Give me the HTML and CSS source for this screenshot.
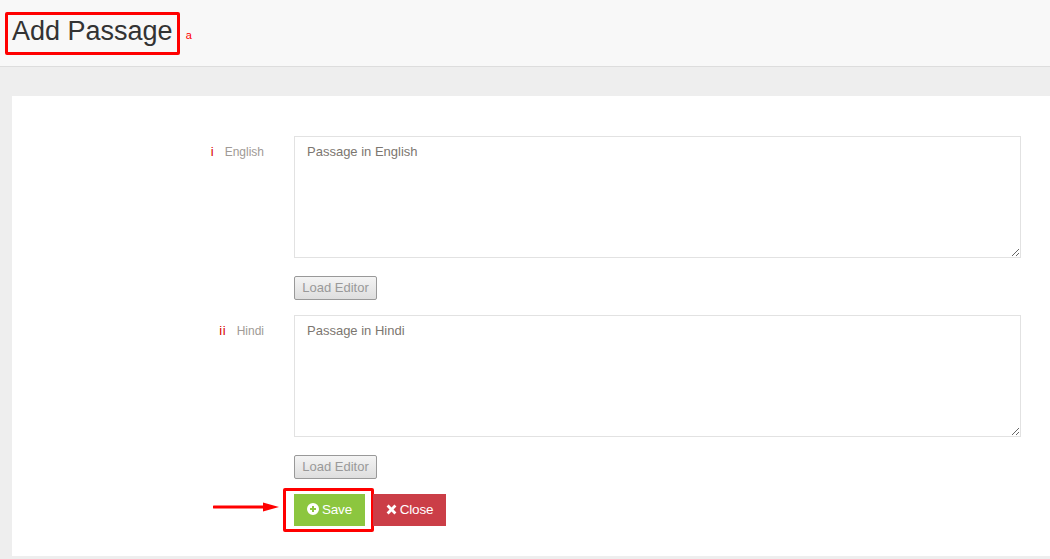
FILE: index.html
```html
<!DOCTYPE html>
<html lang="en">
<head>
<meta charset="utf-8">
<title>Add Passage</title>
<link rel="stylesheet" href="styles.css">
</head>
<body>
<header class="page-head">
  <h1 class="title">Add Passage<span class="title-box"></span></h1>
  <span class="note-a">a</span>
</header>
<main class="panel">
  <form class="form">
    <div class="row">
      <label class="label"><span class="mark">i</span><span>English</span></label>
      <div class="field">
        <textarea class="area" placeholder="Passage in English"></textarea>
        <button type="button" class="load">Load Editor</button>
      </div>
    </div>
    <div class="row">
      <label class="label"><span class="mark">ii</span><span>Hindi</span></label>
      <div class="field">
        <textarea class="area" placeholder="Passage in Hindi"></textarea>
        <button type="button" class="load">Load Editor</button>
      </div>
    </div>
    <div class="row actions-row">
      <div class="label arrow-cell">
        <svg class="arrow" width="66" height="10" viewBox="0 0 66 10"><path d="M1 3.5h50a1.5 1.5 0 0 1 0 3H1a1.5 1.5 0 0 1 0-3z" fill="#f00"/><path d="M50 0.5 66 5 50 9.5z" fill="#f00"/></svg>
      </div>
      <div class="actions">
        <button type="button" class="btn save">
          <svg class="ico" width="12" height="12" viewBox="0 0 12 12"><path fill-rule="evenodd" d="M6 0a6 6 0 1 1 0 12A6 6 0 0 1 6 0zM5 3v2H3v2h2v2h2V7h2V5H7V3z" fill="#fff"/></svg>Save<span class="save-box"></span>
        </button>
        <button type="button" class="btn close">
          <svg class="ico" width="11" height="11" viewBox="0 0 11 11"><path d="M2.6 0.6 5.5 3.5 8.4 0.6l2 2L7.5 5.5l2.9 2.9-2 2L5.5 7.5l-2.9 2.9-2-2L3.5 5.5 0.6 2.6z" fill="#fff"/></svg>Close
        </button>
      </div>
    </div>
  </form>
</main>
</body>
</html>
```

FILE: styles.css
```css
* { box-sizing: border-box; }
html, body { margin: 0; padding: 0; }
body {
  background: #eee;
  font-family: "Liberation Sans", Arial, sans-serif;
  height: 559px;
  overflow: hidden;
}
.page-head {
  height: 67px;
  background: #f8f8f8;
  border-bottom: 1px solid #ddd;
  padding-left: 12px;
  display: flex;
  align-items: flex-start;
}
.title {
  position: relative;
  margin: 14px 0 0;
  font-size: 27px;
  font-weight: 400;
  line-height: 34px;
  color: #333;
}
.title-box {
  position: absolute;
  left: -7px;
  top: -2px;
  width: 175px;
  height: 43px;
  border: 3px solid #f00;
  border-radius: 2px;
}
.note-a {
  margin: 29px 0 0 13px;
  font-size: 11px;
  line-height: 13px;
  color: #f00;
}
.panel {
  margin: 29px 0 0 12px;
  height: 460px;
  background: #fff;
  padding: 40px 29px 0 0;
}
.form { display: flex; flex-direction: column; gap: 15px; }
.row { display: flex; }
.label {
  width: 252px;
  flex: none;
  display: flex;
  justify-content: flex-end;
  gap: 10.5px;
  padding-top: 9px;
  font-size: 12px;
  line-height: 14px;
  color: #a09a96;
}
.mark { color: #d80000; font-size: 13px; font-weight: 400; letter-spacing: 0.5px; }
.field { margin-left: 30px; flex: 1; display: flex; flex-direction: column; align-items: flex-start; gap: 18px; }
.area {
  display: block;
  width: 100%;
  height: 122px;
  border: 1px solid #e2e2e2;
  background: #fff;
  padding: 6px 12px;
  font-family: inherit;
  font-size: 13px;
  line-height: 17px;
  color: #555;
  border-radius: 0;
  outline: none;
}
.area::placeholder { color: #7c7670; opacity: 1; }
.load {
  width: 83px;
  height: 24px;
  padding: 0 0 2px;
  font-family: inherit;
  font-size: 13px;
  color: #999;
  background: linear-gradient(#f4f4f4, #dedede);
  border: 1px solid #999;
  border-radius: 2px;
}
.actions-row { position: relative; }
.arrow-cell { padding-top: 8px; }
.arrow { position: absolute; left: 201px; top: 8px; }
.actions { margin-left: 30px; display: flex; gap: 8px; }
.btn {
  position: relative;
  height: 32px;
  border: 0;
  padding: 0 0 2px;
  display: flex;
  align-items: center;
  justify-content: center;
  gap: 3px;
  font-family: inherit;
  font-size: 13.5px;
  letter-spacing: -0.2px;
  color: #fff;
}
.save { width: 71px; background: #8cc63f; padding-left: 3px; }
.close { width: 73px; background: #cb3e47; }
.ico { flex: none; }
.save-box {
  position: absolute;
  left: -11px;
  top: -6px;
  width: 91px;
  height: 44px;
  border: 3px solid #f00;
  border-radius: 2px;
}
```
